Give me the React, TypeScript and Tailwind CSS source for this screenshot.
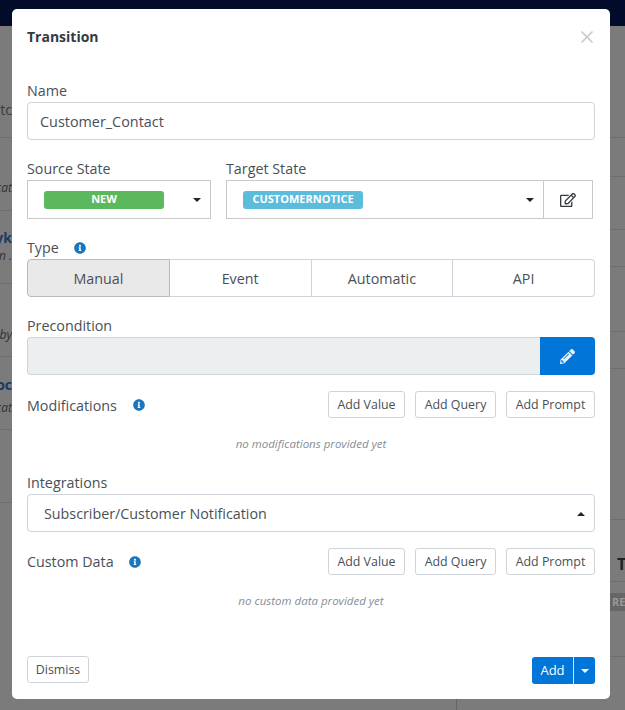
import { X } from "lucide-react";
import { FaPencilAlt, FaRegEdit, FaInfoCircle } from "react-icons/fa";

const font = "font-['Open_Sans',sans-serif]";

function Label({ children }: { children: React.ReactNode }) {
	return <div className="text-[14.3px] leading-[19px] text-[#495057]">{children}</div>;
}

function InfoDot() {
	return <FaInfoCircle className="text-[#1b75bb]" size={12} />;
}

function Caret({ up }: { up?: boolean }) {
	return (
		<span
			className={
				up
					? "w-0 h-0 border-x-[4px] border-x-transparent border-b-[4px] border-b-[#212529]"
					: "w-0 h-0 border-x-[4px] border-x-transparent border-t-[4px] border-t-[#212529]"
			}
		/>
	);
}

function AddButtons() {
	return (
		<div className="flex gap-[10px]">
			<button className="h-[27px] w-[77px] pt-[1px] border border-[#ced4da] rounded-[3px] bg-white text-[12.4px] text-[#495057]">Add Value</button>
			<button className="h-[27px] w-[81px] pt-[1px] border border-[#ced4da] rounded-[3px] bg-white text-[12.4px] text-[#495057]">Add Query</button>
			<button className="h-[27px] w-[89px] pt-[1px] border border-[#ced4da] rounded-[3px] bg-white text-[12.4px] text-[#495057]">Add Prompt</button>
		</div>
	);
}

export default function App() {
	return (
		<div className={`relative h-[710px] w-[625px] overflow-hidden bg-[#7b7b7b] flex flex-col ${font}`}>
			{/* Page behind the dialog */}
			<div className="h-[26px] bg-[#020b2a]" />
			<div className="flex-1 flex justify-between">
				<div className="w-[12px] overflow-hidden whitespace-nowrap text-[12px] italic text-[#333] flex flex-col items-end">
					<div className="w-full h-[112px] shrink-0 border-b border-[#6e6e6e] flex flex-col items-end justify-end pb-[17px] not-italic text-[14px] text-[#3a3a3a]">utc</div>
					<div className="w-full h-[73px] shrink-0 border-b border-[#6e6e6e] flex flex-col items-end justify-end pb-[13px]">cat</div>
					<div className="w-full h-[73px] shrink-0 border-b border-[#6e6e6e] flex flex-col items-end pt-[17px]">
						<span className="not-italic font-bold text-[14px] leading-[20px] text-[#1c3a60]">yk</span>
						<span className="leading-[16px]">on .</span>
					</div>
					<div className="w-full h-[73px] shrink-0 border-b border-[#6e6e6e] flex flex-col items-end justify-end pb-[12px]">by</div>
					<div className="w-full h-[73px] shrink-0 border-b border-[#6e6e6e] flex flex-col items-end pt-[18px]">
						<span className="not-italic font-bold text-[14px] leading-[20px] text-[#1c3a60]">oc</span>
						<span className="leading-[16px] mt-[5px]">cat</span>
					</div>
					<div className="w-full h-[73px] shrink-0 border-b border-[#6e6e6e]" />
				</div>
				<div className="w-[15px] overflow-hidden whitespace-nowrap">
					<div className="h-[112px] border-b border-[#6e6e6e]" />
					<div className="h-[39px] border-b border-[#6e6e6e]" />
					<div className="h-[53px] border-b border-[#6e6e6e]" />
					<div className="h-[37px] border-b border-[#6e6e6e]" />
					<div className="h-[65px] border-b border-[#6e6e6e]" />
					<div className="h-[37px] border-b border-[#6e6e6e]" />
					<div className="h-[151px] border-b border-[#6e6e6e]" />
					<div className="h-[62px] border-b border-[#6e6e6e] flex items-end pl-[7px] pb-[6px] text-[16px] leading-[22px] font-bold text-[#222]">T</div>
					<div className="h-[75px] border-b border-[#6e6e6e] pt-[11px]">
						<div className="h-[18px] pl-[2px] bg-[#666] text-[#999] text-[11px] font-bold leading-[18px]">RE</div>
					</div>
				</div>
			</div>
			<div className="h-[11px] ml-[456px] border-l border-[#666]" />

			{/* Dialog */}
			<div className="absolute left-[12px] top-[9px] w-[598px] h-[690px] bg-white rounded-[5px] px-[15px] flex flex-col">
				<div className="flex justify-between items-center h-[19px] mt-[18px]">
					<h2 className="text-[14px] font-bold text-[#343a40]">Transition</h2>
					<X className="text-[#c8c8c8] mr-[-2px]" size={20} />
				</div>

				<div className="mt-[35px]">
					<Label>Name</Label>
					<div className="mt-[2px] h-[38px] pt-[1px] border border-[#ced4da] rounded-[4px] flex items-center px-[12px] text-[14.4px] text-[#495057]">
						Customer_Contact
					</div>
				</div>

				<div className="mt-[19px] flex gap-[15px]">
					<div className="w-[184px]">
						<Label>Source State</Label>
						<div className="mt-[2px] h-[39px] border border-[#c8c8c8] flex items-center pl-[16px] pr-[9px] justify-between">
							<span className="w-[120px] h-[18px] rounded-[3px] bg-[#5cb85c] text-white text-[11px] font-bold flex items-center justify-center">
								NEW
							</span>
							<Caret />
						</div>
					</div>
					<div className="w-[367px]">
						<Label>Target State</Label>
						<div className="mt-[2px] h-[39px] border border-[#c8c8c8] flex">
							<div className="flex-1 flex items-center pl-[16px] pr-[9px] justify-between">
								<span className="w-[120px] h-[18px] rounded-[3px] bg-[#5bbcdc] text-white text-[11px] font-bold flex items-center justify-center">
									CUSTOMERNOTICE
								</span>
								<Caret />
							</div>
							<div className="w-[49px] border-l border-[#c8c8c8] flex items-center justify-center text-[#343a40]">
								<FaRegEdit size={16} />
							</div>
						</div>
					</div>
				</div>

				<div className="mt-[19px]">
					<div className="flex items-center gap-[15px]">
						<Label>Type</Label>
						<InfoDot />
					</div>
					<div className="mt-[2px] h-[38px] flex text-[14.3px] text-[#495057]">
						<div className="flex-1 pt-[1px] flex items-center justify-center bg-[#e9e9e9] border border-[#b8b8b8] rounded-l-[4px]">Manual</div>
						<div className="flex-1 pt-[1px] flex items-center justify-center border-y border-r border-[#ced4da]">Event</div>
						<div className="flex-1 pt-[1px] flex items-center justify-center border-y border-r border-[#ced4da]">Automatic</div>
						<div className="flex-1 pt-[1px] flex items-center justify-center border-y border-r border-[#ced4da] rounded-r-[4px]">API</div>
					</div>
				</div>

				<div className="mt-[19px]">
					<Label>Precondition</Label>
					<div className="mt-[2px] h-[38px] flex">
						<div className="flex-1 bg-[#ecefef] border border-[#ced4da] border-r-0 rounded-l-[4px]" />
						<div className="w-[55px] bg-[#0275d8] rounded-r-[4px] flex items-center justify-center text-[#e8f2fb]">
							<FaPencilAlt size={15} />
						</div>
					</div>
				</div>

				<div className="mt-[16px] flex items-center justify-between">
					<div className="flex items-center gap-[16px] pt-[1px]">
						<Label>Modifications</Label>
						<InfoDot />
					</div>
					<AddButtons />
				</div>
				<p className="mt-[18px] text-center text-[11.5px] leading-[15px] italic text-[#868e96]">no modifications provided yet</p>

				<div className="mt-[22px]">
					<Label>Integrations</Label>
					<div className="mt-[2px] h-[38px] pt-[1px] border border-[#ced4da] rounded-[4px] flex items-center justify-between pl-[16px] pr-[9px] text-[14.3px] text-[#495057]">
						Subscriber/Customer Notification
						<Caret up />
					</div>
				</div>

				<div className="mt-[16px] flex items-center justify-between">
					<div className="flex items-center gap-[15px]">
						<Label>Custom Data</Label>
						<InfoDot />
					</div>
					<AddButtons />
				</div>
				<p className="mt-[18px] text-center text-[11.5px] leading-[15px] italic text-[#868e96]">no custom data provided yet</p>

				<div className="mt-auto mb-[15px] flex items-end justify-between">
					<button className="h-[27px] w-[62px] mb-[1px] pt-[1px] border border-[#ced4da] rounded-[3px] text-[12.4px] text-[#495057]">Dismiss</button>
					<div className="h-[27px] flex bg-[#0275d8] rounded-[3px] text-white text-[13px]">
						<span className="w-[42px] flex items-center justify-center border-r border-[#d0e4f5]">Add</span>
						<span className="w-[21px] flex items-center justify-center">
							<span className="w-0 h-0 border-x-[4px] border-x-transparent border-t-[4px] border-t-white" />
						</span>
					</div>
				</div>
			</div>
		</div>
	);
}
